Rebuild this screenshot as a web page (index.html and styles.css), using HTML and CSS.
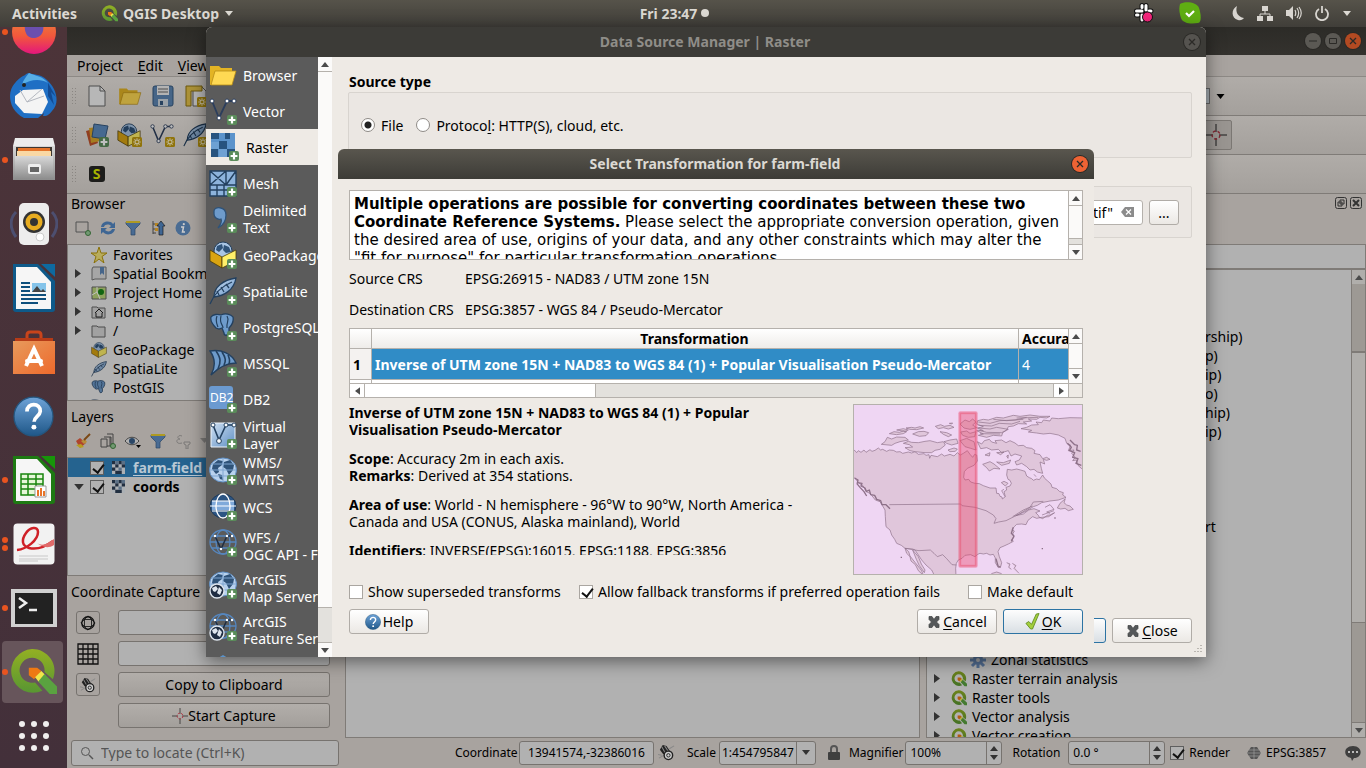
FILE: index.html
```html
<!DOCTYPE html>
<html lang="en">
<head>
<meta charset="utf-8">
<title>QGIS Desktop</title>
<link rel="stylesheet" href="styles.css">
</head>
<body>
<svg class="defs" aria-hidden="true">
  <defs>
    <linearGradient id="g-blue" x1="0" y1="0" x2="1" y2="1"><stop offset="0" stop-color="#cfe0f2"/><stop offset="1" stop-color="#5f8fc4"/></linearGradient>
    <linearGradient id="g-help" x1="0" y1="0" x2="0" y2="1"><stop offset="0" stop-color="#6ea3d8"/><stop offset="1" stop-color="#1f5788"/></linearGradient>
    <linearGradient id="g-fire" x1="0" y1="0" x2="0" y2="1"><stop offset="0" stop-color="#e8923a"/><stop offset=".6" stop-color="#f2573c"/><stop offset="1" stop-color="#e3167d"/></linearGradient>
    <linearGradient id="g-grey" x1="0" y1="0" x2="0" y2="1"><stop offset="0" stop-color="#d8d8d8"/><stop offset="1" stop-color="#8d8d8d"/></linearGradient>
    <linearGradient id="g-q" x1="0" y1="0" x2="0" y2="1"><stop offset="0" stop-color="#93b023"/><stop offset="1" stop-color="#589632"/></linearGradient>
    <linearGradient id="g-shop" x1="0" y1="0" x2="1" y2="1"><stop offset="0" stop-color="#e79a5c"/><stop offset="1" stop-color="#ee6a2c"/></linearGradient>
  </defs>
  <symbol id="plus" viewBox="0 0 10 10"><rect width="10" height="10" rx="2" fill="#5a8c5a"/><path d="M5 1.600v6.800M1.600 5h6.800" stroke="#fff" stroke-width="2.200"/></symbol>
  <symbol id="star8" viewBox="0 0 10 10"><rect width="10" height="10" rx="1.500" fill="#c09a10"/><path d="M5 1.300v7.400M1.300 5h7.400M2.400 2.400l5.200 5.200M7.600 2.400L2.400 7.600" stroke="#fff6c8" stroke-width="1.100"/><circle cx="5" cy="5" r="1.200" fill="#c09a10"/></symbol>
  <symbol id="qlogo" viewBox="0 0 46 46"><path fill-rule="evenodd" d="M22 1a21 21 0 1 0 10 40l-7-8A12 12 0 1 1 34 23l8 7A21 21 0 0 0 22 1z" fill="url(#g-q)"/><path d="M19 19h8l4 3-7 8-5-4z" fill="#ee7913"/><path d="M25 28l6-6 4 4-6 7z" fill="#f0e64a"/><path d="M28 32l6-7 12 12v7h-7z" fill="#5aa240"/></symbol>
  <symbol id="folder" viewBox="0 0 28 24"><path d="M1 3h9l2 2h11v4H7L3 22H1z" fill="#e3b424"/><path d="M6 8h21l-4 14H2z" fill="#ffd953" stroke="#b78d16" stroke-width=".8"/></symbol>
  <symbol id="vector" viewBox="0 0 28 28"><path d="M3 4l7 17 8-17h7" fill="none" stroke="#2c3e5c" stroke-width="1.800"/><g fill="#fff" stroke="#2c3e5c"><circle cx="3" cy="4" r="2"/><circle cx="10" cy="21" r="2"/><circle cx="18" cy="4" r="2"/><circle cx="25" cy="4" r="2"/></g></symbol>
  <symbol id="raster" viewBox="0 0 24 24"><path fill="#5b93cb" d="M0 0h24v24H0z"/><path fill="#27537f" d="M0 0h8v6H0zM14 0h5v6h-5zM8 8h8v8H8zM0 16h7v8H0zM16 16h8v8h-8z"/><path fill="#9cc3e8" d="M0 9h8v7H0zM8 16h8v8H8z" opacity=".3"/></symbol>
  <symbol id="raster-mono" viewBox="0 0 12 12"><path fill="#e4eaf0" d="M0 0h12v12H0z"/><path fill="#2c3e55" d="M0 0h3v3H0zM6 0h3v3H6zM3 3h3v3H3zM9 3h3v3H9zM0 6h3v3H0zM6 9h3v3H6zM3 9h3v3H3z"/><path fill="#7995b3" d="M3 0h3v3H3zM6 6h3v3H6zM9 0h3v3H9z"/></symbol>
  <symbol id="mesh" viewBox="0 0 28 28"><path fill="#8db3dc" d="M1 2h26v25H1z"/><path d="M1 2h26v25H1zM1 16h26M17 2v14M1 2l16 14M17 2L1 16M17 16L27 2M8 16v11M15 16v11M1 21h26" fill="none" stroke="#23405f" stroke-width="1.400"/></symbol>
  <symbol id="comma" viewBox="0 0 28 28"><path d="M5 6c0-5 12-5 12 4 0 7-4 11-8 13 3-4 4-7 3-9-3 1-7-1-7-5z" fill="#6e9bcb" stroke="#2f5379" stroke-width="1.300"/></symbol>
  <symbol id="box" viewBox="0 0 28 28"><circle cx="14" cy="10" r="9" fill="#a9c5e4" stroke="#23405f"/><path d="M8 5l5-2 1 4-4 4-3-2zM15 4l5 2 2 5-5 1-3-3z" fill="#2f5379"/><path d="M1 9l12 7v11L1 20z" fill="#d9a411" stroke="#4a3b08" stroke-width=".8"/><path d="M27 9l-14 7v11l14-7z" fill="#fff06a" stroke="#4a3b08" stroke-width=".8"/></symbol>
  <symbol id="feather" viewBox="0 0 28 28"><path d="M27 1C14 3 5 10 5 20c10-1 20-7 22-19z" fill="url(#g-blue)" stroke="#23405f" stroke-width="1.300"/><path d="M1 27C5 17 13 9 23 5M8 14l2 4M12 10l3 5M17 7l3 4" fill="none" stroke="#23405f" stroke-width="1.300"/></symbol>
  <symbol id="elephant" viewBox="0 0 28 28"><path d="M2 4c2-3 7-3 10-2 4-2 10-1 12 2 1 5-2 9-4 11v5c-1 3-5 3-5 0l-2-5-3 1-3-1C4 12 1 8 2 4z" fill="#6e9bcb" stroke="#23405f" stroke-width="1.300"/><path d="M8 3c-2 5 0 8 1 11M18 3c3 5-1 6 0 12M12 3c-2 8 2 8 2 12" stroke="#23405f" fill="none" stroke-width="1.200"/></symbol>
  <symbol id="mssql" viewBox="0 0 28 28"><path d="M1 2c12-2 22 3 26 12-8 0-17 4-25 12C7 17 6 9 1 2z" fill="#6e9bcb" stroke="#23405f" stroke-width="1.400"/><path d="M7 2c5 7 5 11 2 18M13 3c4 6 4 9 2 13M19 6c2 4 2 6 1 9" fill="none" stroke="#23405f" stroke-width="1.600"/></symbol>
  <symbol id="db2" viewBox="0 0 28 28"><rect x="0" y="1" width="24" height="23" rx="3" fill="#6b9ad0"/><text x="1" y="17" font-size="12" font-family="Noto Sans, sans-serif" fill="#fff">DB2</text></symbol>
  <symbol id="virtual" viewBox="0 0 28 28"><path d="M2 2h24v24H2z" fill="url(#g-blue)" stroke="#eef4fb"/><path d="M4 4l6 15 7-15h8" fill="none" stroke="#23405f" stroke-width="1.600"/><g fill="#fff" stroke="#23405f"><circle cx="4" cy="4" r="2"/><circle cx="10" cy="20" r="2.400"/><circle cx="17" cy="4" r="2"/><circle cx="25" cy="4" r="2"/></g></symbol>
  <symbol id="earth" viewBox="0 0 28 28"><ellipse cx="14" cy="13" rx="13.500" ry="12" fill="#b9d2ee" stroke="#5f8fc4"/><path d="M4 7l5-4 5 1-1 4-4 3 1 4-3 2-4-5zM15 5l6-2 4 5-1 5-4 5-3-6-3-2zM9 17l4 1 1 5-3-1z" fill="#2f5379"/><path d="M1 13h26M14 1v24M3 7h22M3 19h22" stroke="#7fa5d0" fill="none"/></symbol>
  <symbol id="wcs" viewBox="0 0 28 28"><ellipse cx="14" cy="13" rx="13" ry="12" fill="#2c5583" stroke="#203b5a"/><path d="M3 8h22v9H3z" fill="#7fa9da"/><path d="M1 13h26M3 8h22M3 18h22" stroke="#fff" stroke-width="1.200"/><ellipse cx="14" cy="13" rx="7" ry="12" fill="none" stroke="#fff" stroke-width="1.300"/></symbol>
  <symbol id="wfs" viewBox="0 0 28 28"><g fill="none" stroke="#5687bf" stroke-width="1.300"><ellipse cx="14" cy="13" rx="13" ry="12"/><ellipse cx="14" cy="13" rx="7" ry="12"/><path d="M1 13h26M3 7h22M3 19h22"/></g><path d="M6 7l6 13 6-13h5" fill="none" stroke="#1f2d42" stroke-width="1.500"/><g fill="#fff"><circle cx="6" cy="7" r="1.200"/><circle cx="12" cy="20" r="1.200"/><circle cx="18" cy="7" r="1.200"/><circle cx="23" cy="7" r="1.200"/></g></symbol>
  <symbol id="arcball" viewBox="0 0 16 16"><circle cx="8" cy="8" r="7" fill="#1f2d42" stroke="#dfe6ee" stroke-width="1.400"/><path d="M3 5l4-2 2 3-3 3-2-1zM10 4l3 3-2 5-3-2z" fill="#dfe6ee"/></symbol>
  <symbol id="quest" viewBox="0 0 20 20"><circle cx="10" cy="10" r="9.500" fill="url(#g-help)" stroke="#24567f" stroke-width=".6"/><path d="M6.800 7.500c0-4.500 6.800-4.300 6.500 0-.2 2.300-3 2.600-3 5" fill="none" stroke="#fff" stroke-width="1.800"/><circle cx="10.200" cy="15.200" r="1.200" fill="#fff"/></symbol>
  <symbol id="cross" viewBox="0 0 14 14"><path d="M2 1.500h3l2 3 2-3h3v3L9.500 7l2.500 2.500v3H9l-2-3-2 3H2v-3L4.500 7 2 4.500z" fill="#55585a" stroke="#3d3f41" stroke-width=".7"/></symbol>
  <symbol id="tick" viewBox="0 0 16 18"><path d="M1 11l3-2 3 3 5-11 3-.5L8 17H6z" fill="#a4cf3e" stroke="#5d8a1c" stroke-width=".9"/></symbol>
  <symbol id="up" viewBox="0 0 8 5"><path d="M0 5l4-5 4 5z"/></symbol>
  <symbol id="down" viewBox="0 0 8 5"><path d="M0 0h8L4 5z"/></symbol>
  <symbol id="right" viewBox="0 0 6 9"><path d="M0 0l6 4.500L0 9z"/></symbol>
  <symbol id="left" viewBox="0 0 6 9"><path d="M6 0L0 4.500 6 9z"/></symbol>
  <symbol id="x" viewBox="0 0 16 16"><path d="M5 5l6 6M11 5l-6 6" stroke-width="1.300" fill="none"/></symbol>
  <symbol id="funnel" viewBox="0 0 16 16"><path d="M1 2h14v2l-5 5v6H6V9L1 4z" fill="#5b86b8" stroke="#35587f" stroke-width=".7"/><path d="M1 1h14v2H1z" fill="#d9c02c"/></symbol>
  <symbol id="target" viewBox="0 0 22 22"><path d="M11 0v8M11 14v8M0 11h8M14 11h8" stroke="#222" stroke-width="1"/><circle cx="11" cy="11" r="4" fill="none" stroke="#b03040" stroke-width="1.300" stroke-dasharray="3 2"/></symbol>
  <symbol id="mouse" viewBox="0 0 18 18"><path d="M2 6l3-5 4 1 4 6-4 5-4-3z" fill="#222"/><path d="M4 3l4 7M7 2l4 6M1 15l5-3M0 11l4 1M12 5l5-3" stroke="#888" stroke-width="1.100"/><circle cx="11" cy="12" r="4.500" fill="#ccc" stroke="#222" stroke-width="1.500"/><circle cx="11" cy="12" r="1.800" fill="none" stroke="#222"/></symbol>
  <symbol id="fold" viewBox="0 0 16 16"><path d="M1 3h5l1 1h7v10H1z" fill="#d7d7d7" stroke="#666"/></symbol>
</svg>

<header class="topbar">
  <button class="tb-item">Activities</button>
  <button class="tb-item tb-app"><svg width="17" height="17"><use href="#qlogo"/></svg>QGIS Desktop<svg class="caret" width="10" height="5"><use href="#down"/></svg></button>
  <button class="tb-item tb-clock">Fri 23:47 <span class="dot"></span></button>
  <div class="tray">
    <svg class="slack" width="20" height="20" viewBox="0 0 20 20"><g stroke="#111" stroke-width="5" stroke-linecap="round"><path d="M8 2.500v5M2.500 8H8M12 2.500V8M12 8h5M2.500 12H6M8 12v5"/></g><g stroke="#fff" stroke-width="3" stroke-linecap="round"><path d="M8 2.500v2M2.500 8H8M12 2.500V7M15 8h2M2.500 12H4M8 12v5"/></g><circle cx="13.500" cy="14" r="5" fill="#f5257c" stroke="#111"/></svg>
    <svg class="skype" width="22" height="22" viewBox="0 0 22 22"><path d="M1 2C6-1 18 0 20 6s3 14-1 15c-6 1-15 1-17-5S0 6 1 2z" fill="#5fae12"/><path d="M7 11l3 3 5-5" fill="none" stroke="#fff" stroke-width="2.200"/></svg>
    <svg class="moon" width="14" height="16" viewBox="0 0 14 16"><path d="M6 1C0 4 0 13 7 15c3 1 5-1 6-2C7 12 4 7 6 1z" fill="#d8d5d0"/></svg>
    <svg class="net" width="16" height="16" viewBox="0 0 16 16"><path d="M5 1h6v5H5zM0 11h6v5H0zM10 11h6v5h-6z" fill="#d8d5d0"/><path d="M8 6v3M3 11V9h10v2" fill="none" stroke="#d8d5d0"/></svg>
    <svg class="vol" width="16" height="14" viewBox="0 0 16 14"><path d="M0 4h3l4-4v14l-4-4H0z" fill="#d8d5d0"/><path d="M9 4c1 2 1 4 0 6M11 2c2 3 2 7 0 10M13 1c3 4 3 8 0 12" fill="none" stroke="#d8d5d0" stroke-width="1.200"/></svg>
    <svg class="power" width="14" height="15" viewBox="0 0 14 15"><path d="M4 3a6 6 0 1 0 6 0M7 0v7" fill="none" stroke="#d8d5d0" stroke-width="1.800"/></svg>
    <svg class="caret" width="10" height="5"><use href="#down"/></svg>
  </div>
</header>

<main class="desktop">
  <nav class="dock" aria-label="Dock">
    <a href="#" class="run1" aria-label="Firefox"><svg width="46" height="46" viewBox="0 0 46 46"><circle cx="23" cy="23" r="22" fill="url(#g-fire)"/><path d="M14 16c2-6 14-8 18-1 2 10-4 14-10 14s-9-6-8-13z" fill="#6b4fae"/></svg></a>
    <a href="#" aria-label="Thunderbird"><svg width="48" height="48" viewBox="0 0 48 48"><path d="M19 1c3 2 11 0 18 7 10 9 13 23 5 31-4 5-6 5-9 5l1-3-6 5H14C4 41 0 32 0 24 0 14 8 7 13 4c2 0 3-3 6-3z" fill="#1f6fc4"/><path d="M19 1c6 3 14 3 19 10-9-5-18-3-26 2 1-5 4-8 7-12z" fill="#58aee6"/><path d="M38 11l8 14-5-5 3 13-6-9z" fill="#124b94"/><path d="M5 24l8-6 20-1 5 13-6 12-18-1-9-10z" fill="#f4f4f4"/><path d="M10 18l7 12 15-13M17 30l17-6" fill="none" stroke="#b4b8c0"/><circle cx="14" cy="13" r="2" fill="#222"/></svg></a>
    <a href="#" class="run1" aria-label="Files"><svg width="42" height="46" viewBox="0 0 42 46"><path d="M2 1h38l2 8H0z" fill="#ececec"/><path d="M0 9h42v34H0z" fill="url(#g-grey)"/><path d="M3 10h36v11H3z" fill="#3d3630"/><path d="M5 11h32v9H5z" fill="#e5742a"/><path d="M4 14h34v5H4z" fill="#f9d8a4"/><path d="M2 19h38v23H2z" fill="url(#g-grey)"/><rect x="15" y="27" width="13" height="10" rx="2" fill="#eee"/><path d="M17 30h9v5h-9z" fill="#666"/></svg></a>
    <a href="#" aria-label="Rhythmbox"><svg width="48" height="46" viewBox="0 0 48 46"><path d="M6 11C-1 18 0 28 6 36M42 11c7 7 6 17 0 25" fill="none" stroke="#4d4f70" stroke-width="3"/><rect x="9" y="2" width="30" height="42" rx="5" fill="#ededed"/><circle cx="24" cy="21" r="11" fill="#333"/><circle cx="24" cy="21" r="8.500" fill="#e7ac20"/><circle cx="24" cy="21" r="4" fill="#333"/><circle cx="30" cy="36" r="4" fill="#fff" stroke="#ccc"/></svg></a>
    <a href="#" aria-label="Writer"><svg width="42" height="48" viewBox="0 0 42 48"><path d="M0 0h25l17 17v28q0 3-3 3H3q-3 0-3-3z" fill="#0e5a8a"/><path d="M28 0h14v13z" fill="#0e6aa0"/><path d="M3 3h21l14 15v27H3z" fill="#f6f6f6"/><path d="M8 19h9M8 23h9M8 27h9M8 31h25M8 35h25M8 39h17" stroke="#0e4f7c" stroke-width="2"/><path d="M19 19h14v9H19z" fill="#85c4ea"/><path d="M19 28l5-6 4 5 2-2 3 3z" fill="#444"/></svg></a>
    <a href="#" aria-label="Software"><svg width="44" height="44" viewBox="0 0 44 44"><path d="M15 12V5q0-3 3-3h8q3 0 3 3v7" fill="none" stroke="#c9441b" stroke-width="3"/><path d="M3 8h38v6H3z" fill="#b63b17"/><path d="M1 11h42v33H1z" fill="url(#g-shop)"/><path d="M14 36l8-17 8 17" fill="none" stroke="#fff" stroke-width="4"/><rect x="13" y="29" width="18" height="4" rx="2" fill="#fff"/></svg></a>
    <a href="#" aria-label="Help"><svg width="41" height="41"><use href="#quest"/></svg></a>
    <a href="#" class="run1" aria-label="Calc"><svg width="42" height="48" viewBox="0 0 42 48"><path d="M0 0h25l17 17v28q0 3-3 3H3q-3 0-3-3z" fill="#1d7a12"/><path d="M28 0h14v13z" fill="#17960a"/><path d="M3 3h21l14 15v27H3z" fill="#f6f6f6"/><path d="M8 18h22v21H8zM8 23h22M8 28h22M8 33h22M15 18v21M23 18v21" fill="#e6f7d9" stroke="#18850e" stroke-width="1.500"/><path d="M22 30h11v11H22z" fill="#fff" stroke="#999"/><path d="M25 40v-6M28 40v-8M31 40v-5" stroke="#e8742a" stroke-width="2"/></svg></a>
    <a href="#" class="run2" aria-label="Document Viewer"><svg width="42" height="42" viewBox="0 0 42 42"><rect x=".5" y=".5" width="41" height="41" rx="4" fill="#f2f2f2"/><path d="M4 27C14 26 25 17 25 9c0-6-8-5-12 1-5 7-4 13 3 15 8 2 16-1 24-7" fill="none" stroke="#cf2027" stroke-width="2.500"/><path d="M24 20c6 4 11 0 17-4v6c-6 4-12 2-17-2z" fill="#e16a6a"/><path d="M6 33h29M6 36h29M6 38h19" stroke="#c8c8c8"/></svg></a>
    <a href="#" class="run1" aria-label="Terminal"><svg width="46" height="38" viewBox="0 0 46 38"><path d="M0 0h46v38H0z" fill="#d0d0d0"/><path d="M4 4h38v31H4z" fill="#222"/><path d="M8 9l7 5-7 5M18 21h8" fill="none" stroke="#eee" stroke-width="2.500"/></svg></a>
    <a href="#" class="run1 current" aria-label="QGIS"><svg width="48" height="48"><use href="#qlogo"/></svg></a>
    <a href="#" aria-label="Show Applications"><svg width="32" height="32" viewBox="0 0 32 32" fill="#f0eeee"><circle cx="4" cy="4" r="3"/><circle cx="16" cy="4" r="3"/><circle cx="28" cy="4" r="3"/><circle cx="4" cy="16" r="3"/><circle cx="16" cy="16" r="3"/><circle cx="28" cy="16" r="3"/><circle cx="4" cy="28" r="3"/><circle cx="16" cy="28" r="3"/><circle cx="28" cy="28" r="3"/></svg></a>
  </nav>

  <section class="qgis" aria-label="QGIS">
    <div class="q-title">
      <button class="wbtn" aria-label="Minimize"><svg width="16" height="16" viewBox="0 0 16 16"><path d="M4 8h8"/></svg></button>
      <button class="wbtn" aria-label="Maximize"><svg width="16" height="16" viewBox="0 0 16 16"><path d="M4.500 5.500h7v5h-7z"/></svg></button>
      <button class="wbtn wclose" aria-label="Close"><svg width="16" height="16"><use href="#x"/></svg></button>
    </div>
    <div class="menubar"><button>Pro<u>j</u>ect</button><button><u>E</u>dit</button><button><u>V</u>iew</button></div>
    <div class="toolbar">
      <i class="grip"></i>
      <button aria-label="New"><svg width="18" height="22" viewBox="0 0 18 22"><path d="M1 1h11l5 5v15H1z" fill="#f4f4f4" stroke="#666"/><path d="M12 1v5h5" fill="none" stroke="#666"/></svg></button>
      <button aria-label="Open"><svg width="24" height="20"><use href="#folder"/></svg></button>
      <button aria-label="Save"><svg width="22" height="22" viewBox="0 0 22 22"><rect x="1" y="1" width="20" height="20" rx="2" fill="#5d87b4" stroke="#35587f"/><path d="M5 1h12v9H5z" fill="#eee"/><path d="M6 4h10M6 7h10" stroke="#666"/><path d="M6 14h10v7H6z" fill="#cfd8e0"/><path d="M8 16h3v4H8z" fill="#35587f"/></svg></button>
      <button aria-label="New layout"><svg width="22" height="22" viewBox="0 0 22 22"><path d="M8 2h9l4 4v15H8z" fill="#f4f4f4" stroke="#666"/><path d="M1 1h16v5H6v15H1z" fill="#e6c44a" stroke="#8f7512"/><use href="#star8" x="12" y="12" width="10" height="10"/></svg></button>
      <span class="spacer"></span>
      <button class="combo-edge" aria-label="Colour"></button><button aria-label="More"><svg width="9" height="5"><use href="#down"/></svg></button>
    </div>
    <div class="toolbar">
      <i class="grip"></i>
      <button aria-label="Data source manager"><svg width="24" height="24" viewBox="0 0 24 24"><path d="M1 8l7-2 5 14-8 3z" fill="#c0532a"/><path d="M4 5l8-1 3 14-9 2z" fill="#dba72a"/><path d="M9 1l14 2-3 13-13-2z" fill="#5d8cc0" stroke="#35587f"/><use href="#plus" x="14" y="14" width="10" height="10"/></svg></button>
      <button aria-label="New GeoPackage"><svg width="25" height="24" viewBox="0 0 25 24"><use href="#box" width="24" height="24"/><use href="#star8" x="15" y="14" width="10" height="10"/></svg></button>
      <button aria-label="New shapefile"><svg width="25" height="24" viewBox="0 0 25 24"><use href="#vector" width="24" height="24"/><use href="#star8" x="15" y="14" width="10" height="10"/></svg></button>
      <button aria-label="New SpatiaLite"><svg width="25" height="24" viewBox="0 0 25 24"><use href="#feather" width="24" height="24"/><use href="#star8" x="15" y="14" width="10" height="10"/></svg></button>
      <span class="spacer"></span>
      <button class="pressed" aria-label="Capture"><svg width="22" height="22"><use href="#target"/></svg></button>
    </div>
    <div class="toolbar"><i class="grip"></i><button aria-label="Plugin"><span class="splug">S</span></button></div>

    <div class="workarea">
      <aside class="left">
        <div class="browser-panel">
          <h2>Browser</h2>
          <div class="mini">
            <svg viewBox="0 0 16 16"><path d="M1 2h12v10H1z" fill="none" stroke="#666"/><circle cx="13" cy="13" r="2.500" fill="#8fbf8f" stroke="#3f7d3f"/></svg>
            <svg viewBox="0 0 16 16"><path d="M1 7c1-6 9-7 12-3l2-2v6H9l2-2c-2-2-6-2-7 1zM15 9c-1 6-9 7-12 3l-2 2V8h6l-2 2c2 2 6 2 7-1z" fill="#4f7fb8"/></svg>
            <svg><use href="#funnel"/></svg>
            <svg viewBox="0 0 16 16"><path d="M3 1v13M3 4h3M3 9h3M3 13h3" stroke="#555"/><path d="M5 3h3v3H5zM5 8h3v3H5z" fill="#e2a52a"/><path d="M11 1l4 5h-2v9H9V6H7z" fill="#4f7fb8" stroke="#222" stroke-width=".7"/></svg>
            <svg viewBox="0 0 16 16"><circle cx="8" cy="8" r="7.500" fill="#5d87b8"/><path d="M6 7h2.500L7.500 12H10" stroke="#fff" fill="none" stroke-width="1.500"/><circle cx="8.800" cy="4.200" r="1.100" fill="#fff"/></svg>
          </div>
          <ul class="tree">
            <li><i></i><svg class="ic" viewBox="0 0 16 16"><path d="M8 0l2 6h6l-5 3.500L13 16l-5-4-5 4 2-6.500L0 6h6z" fill="#f5e57a" stroke="#b8960c"/></svg>Favorites</li>
            <li><i><svg><use href="#right"/></svg></i><svg class="ic" viewBox="0 0 16 16"><path d="M2 1h13v12H4l-3 1V3z" fill="#ddd" stroke="#777"/><path d="M9 1h4v8l-2-2-2 2z" fill="#5d87b8"/></svg>Spatial Bookmarks</li>
            <li><i><svg><use href="#right"/></svg></i><svg class="ic" viewBox="0 0 16 16"><path d="M1 2h14v12H1z" fill="#bcd77c" stroke="#666"/><path d="M1 10l5-3 3 7M6 2v5" stroke="#fff" fill="none"/><circle cx="10" cy="7" r="3" fill="#178717"/></svg>Project Home</li>
            <li><i><svg><use href="#right"/></svg></i><svg class="ic" viewBox="0 0 16 16"><use href="#fold"/><path d="M4 9l4-4 4 4M5 9v4h6V9" fill="none" stroke="#222"/></svg>Home</li>
            <li><i><svg><use href="#right"/></svg></i><svg class="ic"><use href="#fold"/></svg>/</li>
            <li><i></i><svg class="ic"><use href="#box"/></svg>GeoPackage</li>
            <li><i></i><svg class="ic"><use href="#feather"/></svg>SpatiaLite</li>
            <li><i></i><svg class="ic"><use href="#elephant"/></svg>PostGIS</li>
            <li><i></i><svg class="ic"><use href="#mssql"/></svg></li>
          </ul>
        </div>
        <div class="layers-panel">
          <h2>Layers</h2>
          <div class="mini">
            <svg viewBox="0 0 16 16"><path d="M1 8l4-3 6 5-6 5z" fill="#d9563a"/><path d="M1 12l5-1 3 3-4 1z" fill="#e6c42a"/><path d="M6 8l4-2 2 3-3 2z" fill="#e6b04a"/><path d="M9 7l6-6" stroke="#9a5a1a" stroke-width="2"/></svg>
            <svg viewBox="0 0 16 16"><path d="M1 6h6v8H1zM4 4h7v9H7M7 1h6v10h-2M10 4v9" fill="none" stroke="#555"/><circle cx="13" cy="13" r="2.500" fill="#8fbf8f" stroke="#3f7d3f"/></svg>
            <svg viewBox="0 0 16 16"><path d="M0 8c4-5 10-5 14 0-4 5-10 5-14 0z" fill="#ddd" stroke="#555"/><circle cx="7" cy="8" r="3" fill="#35587f"/><path d="M11 12h5l-2.500 3z"/></svg>
            <svg><use href="#funnel"/></svg>
            <svg class="faded" viewBox="0 0 16 16"><path d="M7 3C3 1 1 6 5 6 0 6 1 12 7 10M9 9h6v2l-2 1v4h-2v-4l-2-1z" fill="none" stroke="#777"/></svg>
            <svg class="faded" viewBox="0 0 16 16"><path d="M0 5h9L4.500 10z" fill="#777"/></svg>
          </div>
          <ul class="tree layers">
            <li class="sel"><i></i><input type="checkbox" checked aria-label="farm-field"><svg class="ic"><use href="#raster-mono"/></svg><b><u>farm-field</u></b></li>
            <li><i><svg class="dn"><use href="#down"/></svg></i><input type="checkbox" checked aria-label="coords"><svg class="ic"><use href="#raster-mono"/></svg><b>coords</b></li>
          </ul>
        </div>
        <div class="capture">
          <h2>Coordinate Capture</h2>
          <div class="cap-row"><button class="sq" aria-label="CRS"><svg viewBox="0 0 18 18"><circle cx="9" cy="9" r="7" fill="none" stroke="#111" stroke-width="1.500"/><path d="M9 1l8 8-8 8-8-8zM5 5h8v8H5z" fill="none" stroke="#111"/></svg></button><input type="text" aria-label="Coordinate in CRS"></div>
          <div class="cap-row"><span class="sq bare"><svg viewBox="0 0 22 22"><path d="M1 1h20v20H1zM6 1v20M11 1v20M16 1v20M1 6h20M1 11h20M1 16h20" fill="none" stroke="#111" stroke-width="1.300"/></svg></span><input type="text" aria-label="Coordinate in canvas"></div>
          <div class="cap-row"><button class="sq" aria-label="Track"><svg><use href="#mouse"/></svg></button><button class="wide">Copy to Clipboard</button></div>
          <div class="cap-row"><span class="sq bare"></span><button class="wide"><svg width="16" height="16"><use href="#target"/></svg>Start Capture</button></div>
        </div>
      </aside>
      <div class="canvas"></div>
      <aside class="rightpane">
        <div class="rp-head"><button aria-label="Float"><svg viewBox="0 0 12 12"><rect x=".5" y=".5" width="11" height="11" rx="2"/><path d="M5 3h4v4H5zM3 5h4v4H3z"/></svg></button><button aria-label="Close panel"><svg viewBox="0 0 12 12"><rect x=".5" y=".5" width="11" height="11" rx="2"/><path d="M3 3l6 6M9 3L3 9" stroke-width="2"/></svg></button></div>
        <input class="rp-search" type="text" aria-label="Search">
        <div class="rp-body">
          <div class="rp-list">
            <ul class="tails"><li>rship)</li><li>p)</li><li>ip)</li><li>o)</li><li>hip)</li><li>ip)</li></ul>
            <ul class="tails tail2"><li>rt</li></ul>
            <ul class="tools">
              <li class="sub"><svg class="ic" viewBox="0 0 16 16"><path d="M8 0v16M0 8h16M2 2l12 12M14 2L2 14" stroke="#6f93c4" stroke-width="3"/><circle cx="8" cy="8" r="5" fill="#6f93c4"/><circle cx="8" cy="8" r="2" fill="#ddd"/></svg>Zonal statistics</li>
              <li><i><svg><use href="#right"/></svg></i><svg class="ic"><use href="#qlogo"/></svg>Raster terrain analysis</li>
              <li><i><svg><use href="#right"/></svg></i><svg class="ic"><use href="#qlogo"/></svg>Raster tools</li>
              <li><i><svg><use href="#right"/></svg></i><svg class="ic"><use href="#qlogo"/></svg>Vector analysis</li>
              <li><i><svg><use href="#right"/></svg></i><svg class="ic"><use href="#qlogo"/></svg>Vector creation</li>
            </ul>
          </div>
          <div class="vbar dim"><span class="sb"><svg><use href="#up"/></svg></span><span class="trough t1"></span><span class="thumb"></span><span class="trough t2"></span><span class="sb"><svg><use href="#down"/></svg></span></div>
        </div>
      </aside>
    </div>

    <footer class="status">
      <label class="locate"><svg width="14" height="14" viewBox="0 0 14 14"><circle cx="5.500" cy="5.500" r="4" fill="none" stroke="#555"/><path d="M9 9l4 4" stroke="#555" stroke-width="1.500"/></svg><input type="text" placeholder="Type to locate (Ctrl+K)"></label>
      <label for="coord">Coordinate</label><input id="coord" class="f coord" value="13941574,-32386016"><svg class="smouse" width="17" height="17"><use href="#mouse"/></svg>
      <label for="scale">Scale</label><span class="selwrap"><select id="scale" class="f"><option>1:454795847</option></select><svg width="8" height="5"><use href="#down"/></svg></span>
      <svg class="lock" width="12" height="16" viewBox="0 0 12 16"><path d="M3 8V4q0-3 3-3t3 3v4" fill="none" stroke="#555" stroke-width="2"/><rect y="7" width="12" height="8" rx="1" fill="#3f3f3f"/></svg>
      <label for="mag">Magnifier</label><span class="spin"><input id="mag" value="100%"><span><svg><use href="#up"/></svg><svg><use href="#down"/></svg></span></span>
      <label for="rot" class="rotl">Rotation</label><span class="spin"><input id="rot" value="0.0 °"><span><svg><use href="#up"/></svg><svg><use href="#down"/></svg></span></span>
      <label class="render"><input type="checkbox" checked>Render</label>
      <button class="crs"><svg width="14" height="14" viewBox="0 0 14 14"><path d="M4 1h6l4 6-4 6H4L0 7z" fill="#555"/><path d="M0 7h14M7 0v14M2 4h10M2 10h10" stroke="#aaa" stroke-width=".6"/></svg>EPSG:3857</button>
      <button class="msg" aria-label="Messages"><svg width="16" height="16" viewBox="0 0 16 16"><path d="M8 1c10 0 10 12 1 12l-2 3-1-3C-2 12-2 1 8 1z" fill="#3f3f3f"/><path d="M3 7h2M7 7h2M11 7h2" stroke="#bbb" stroke-width="2"/></svg></button>
    </footer>
  </section>
</main>

<section class="win dsm" role="dialog" aria-label="Data Source Manager">
  <div class="wtitle inactive"><h1>Data Source Manager | Raster</h1><button class="wbtn" aria-label="Close"><svg width="16" height="16"><use href="#x"/></svg></button></div>
  <div class="dsm-body">
    <nav class="sources">
      <a href="#"><svg class="si"><use href="#folder"/></svg>Browser</a>
      <a href="#"><span class="si"><svg><use href="#vector"/></svg><svg class="pl"><use href="#plus"/></svg></span>Vector</a>
      <a href="#" class="on"><span class="si"><svg class="ras"><use href="#raster"/></svg><svg class="pl"><use href="#plus"/></svg></span>Raster</a>
      <a href="#"><span class="si"><svg><use href="#mesh"/></svg><svg class="pl"><use href="#plus"/></svg></span>Mesh</a>
      <a href="#" class="two"><span class="si"><svg><use href="#comma"/></svg><svg class="pl"><use href="#plus"/></svg></span>Delimited<br>Text</a>
      <a href="#"><span class="si"><svg><use href="#box"/></svg><svg class="pl"><use href="#plus"/></svg></span>GeoPackage</a>
      <a href="#"><span class="si"><svg><use href="#feather"/></svg><svg class="pl"><use href="#plus"/></svg></span>SpatiaLite</a>
      <a href="#"><span class="si"><svg><use href="#elephant"/></svg><svg class="pl"><use href="#plus"/></svg></span>PostgreSQL</a>
      <a href="#"><span class="si"><svg><use href="#mssql"/></svg><svg class="pl"><use href="#plus"/></svg></span>MSSQL</a>
      <a href="#"><span class="si"><svg><use href="#db2"/></svg><svg class="pl"><use href="#plus"/></svg></span>DB2</a>
      <a href="#" class="two"><span class="si"><svg><use href="#virtual"/></svg><svg class="pl"><use href="#plus"/></svg></span>Virtual<br>Layer</a>
      <a href="#" class="two"><span class="si"><svg><use href="#earth"/></svg><svg class="pl"><use href="#plus"/></svg></span>WMS/<br>WMTS</a>
      <a href="#"><span class="si"><svg><use href="#wcs"/></svg><svg class="pl"><use href="#plus"/></svg></span>WCS</a>
      <a href="#" class="two tall"><span class="si"><svg><use href="#wfs"/></svg><svg class="pl"><use href="#plus"/></svg></span>WFS /<br>OGC API - Features</a>
      <a href="#" class="two tall"><span class="si"><svg><use href="#earth"/></svg><svg class="arc"><use href="#arcball"/></svg><svg class="pl"><use href="#plus"/></svg></span>ArcGIS<br>Map Server</a>
      <a href="#" class="two tall"><span class="si"><svg><use href="#wfs"/></svg><svg class="arc"><use href="#arcball"/></svg><svg class="pl"><use href="#plus"/></svg></span>ArcGIS<br>Feature Server</a>
      <a href="#" aria-label="GeoNode"><span class="si"><svg viewBox="0 0 28 28"><path d="M14 0l13 8v12l-13 8-13-8V8z" fill="#5b93cb"/></svg></span></a>
    </nav>
    <div class="vbar src"><span class="sb"><svg><use href="#up"/></svg></span><span class="thumb"></span><span class="trough"></span><span class="sb"><svg><use href="#down"/></svg></span></div>
    <div class="dsm-main">
      <h3>Source type</h3>
      <div class="group g1" role="radiogroup" aria-label="Source type">
        <label><input type="radio" name="st" checked>File</label><label><input type="radio" name="st"><span>Protoco<u>l</u>: HTTP(S), cloud, etc.</span></label>
      </div>
      <div class="group g2">
        <span class="path"><input type="text" aria-label="Raster dataset" value="farm-field.tif&quot;"><svg width="13" height="10" viewBox="0 0 13 10"><path d="M4 0h9v10H4L0 5z" fill="#8b8b8b"/><path d="M5 2.500l5 5M10 2.500l-5 5" stroke="#fff" stroke-width="1.200"/></svg></span><button class="btn dots">...</button>
      </div>
      <div class="dsm-foot"><button class="btn primary" aria-label="Add"></button><button class="btn"><svg width="14" height="14"><use href="#cross"/></svg><span><u>C</u>lose</span></button></div>
      <svg class="resize" width="9" height="9" viewBox="0 0 9 9"><path d="M8 1v1M5 4v1M8 4v1M2 7v1M5 7v1M8 7v1" stroke="#aaa6a0" stroke-width="1.500"/></svg>
    </div>
  </div>
</section>

<section class="win tr" role="dialog" aria-label="Select Transformation for farm-field">
  <div class="wtitle"><h1>Select Transformation for farm-field</h1><button class="wbtn wclose" aria-label="Close"><svg width="16" height="16"><use href="#x"/></svg></button></div>
  <div class="tr-body">
    <div class="note">
      <p><b>Multiple operations are possible for converting coordinates between these two Coordinate Reference Systems.</b> Please select the appropriate conversion operation, given the desired area of use, origins of your data, and any other constraints which may alter the "fit for purpose" for particular transformation operations.</p>
      <div class="vbar"><span class="sb"><svg><use href="#up"/></svg></span><span class="thumb"></span><span class="trough"></span><span class="sb"><svg><use href="#down"/></svg></span></div>
    </div>
    <dl class="crs-pair"><dt>Source CRS</dt><dd>EPSG:26915 - NAD83 / UTM zone 15N</dd><dt>Destination CRS</dt><dd>EPSG:3857 - WGS 84 / Pseudo-Mercator</dd></dl>
    <div class="grid">
      <div class="grid-view"><table><thead><tr><th></th><th class="name">Transformation</th><th>Accuracy (meters)</th></tr></thead><tbody><tr><th>1</th><td><b>Inverse of UTM zone 15N + NAD83 to WGS 84 (1) + Popular Visualisation Pseudo-Mercator</b></td><td>4</td></tr><tr class="next"><th></th><td></td><td></td></tr></tbody></table></div>
      <div class="vbar"><span class="sb"><svg><use href="#up"/></svg></span><span class="thumb"></span><span class="sb"><svg><use href="#down"/></svg></span></div>
      <div class="hbar"><span class="sb"><svg><use href="#left"/></svg></span><span class="thumb"></span><span class="trough"></span><span class="sb"><svg><use href="#right"/></svg></span></div>
      <div class="corner"></div>
    </div>
    <div class="info">
      <div class="desc">
        <p><b>Inverse of UTM zone 15N + NAD83 to WGS 84 (1) + Popular<br>Visualisation Pseudo-Mercator</b></p>
        <p><b>Scope</b>: Accuracy 2m in each axis.<br><b>Remarks</b>: Derived at 354 stations.</p>
        <p><b>Area of use</b>: World - N hemisphere - 96°W to 90°W, North America -<br>Canada and USA (CONUS, Alaska mainland), World</p>
        <p><b>Identifiers</b>: INVERSE(EPSG):16015, EPSG:1188, EPSG:3856</p>
      </div>
      <svg class="map" viewBox="12 15 684 507" preserveAspectRatio="none" role="img" aria-label="Area of use">
        <path fill="#efd6f3" d="M0 0h720v540H0z"/>
        <g fill="#e0c6db" stroke="#8d7088" stroke-width="2" stroke-linejoin="round">
          <path d="M5 157L14 151 20 158 25 152 33 157 42 150 48 157 60 149 66 154 75 151 85 144 92 150 98 148 110 154 118 150 130 151 140 156 150 155 158 160 175 156 185 159 195 155 205 163 222 161 228 166 237 164 239 175 243 166 262 170 275 162 283 168 300 163 312 168 322 158 331 165 340 160 352 152 360 163 368 172 374 163 380 165 382 183 372 196 352 205 343 215 341 232 345 240 356 238 362 246 375 250 388 251 400 257 420 264 438 264 440 280 447 281 450 289 456 291 457 297 466 290 462 275 470 270 468 262 480 258 484 250 480 241 474 238 470 225 472 208 485 210 500 207 512 210 525 214 530 228 538 233 545 236 550 241 560 237 568 239 578 225 584 235 592 242 603 252 606 262 620 266 628 274 640 278 638 285 648 292 625 300 600 303 575 308 562 316 550 320 525 335 497 347 520 342 536 330 552 326 570 333 557 338 565 346 568 352 578 356 592 346 600 345 614 338 596 350 575 352 560 355 548 350 534 361 528 374 515 372 500 373 494 379 486 388 493 393 488 402 492 412 485 418 490 424 475 432 462 438 450 443 444 455 448 470 455 488 452 500 445 503 436 488 436 474 430 463 420 465 410 460 400 462 390 460 383 463 375 470 362 464 345 466 336 475 325 480 319 490 317 505 318 530 255 530 245 510 228 495 215 480 203 462 195 450 188 447 165 445 154 436 140 430 134 418 125 405 120 390 108 380 106 350 105 330 98 318 90 305 76 300 60 280 48 275 40 258 28 250 12 232 5 230z"/>
          <path d="M165 445L176 455 180 468 195 487 215 512 220 526 205 512 196 494 183 483 180 470 170 460zM188 450L205 470 214 492 225 510 223 518 208 497 199 478z"/>
          <path d="M94 133L105 125 112 112 125 117 140 111 165 112 175 120 150 125 135 130 125 136zM118 101L132 95 148 97 160 93 170 95 160 101 140 104zM140 90L160 86 175 90 165 94zM168 84L185 82 195 84 210 80 221 84 200 89 180 88zM188 102L205 95 222 94 236 98 228 107 208 109zM160 130L175 124 185 127 205 128 225 124 240 122 262 128 280 125 286 135 270 148 255 151 245 158 225 158 195 155 180 152 165 143 188 141 178 134zM256 79L272 74 283 79 300 76 312 82 295 87 280 83 265 86zM270 95L290 98 305 105 295 110 280 103zM282 125L300 120 320 117 324 130 305 135 290 130zM294 150L312 144 322 147 316 154 300 155zM298 70L308 69 305 72z"/>
          <path d="M330 72L345 60 358 65 368 57 378 66 368 75 380 83 360 88 342 84zM332 96L350 93 360 100 378 95 374 110 355 112 338 106zM330 122L350 115 360 120 372 125 378 150 362 145 345 140z"/>
          <path d="M383 62L400 58 415 60 440 52 460 54 490 46 510 49 540 45 570 49 600 49 590 54 570 52 560 58 535 57 545 63 520 66 530 72 505 71 490 78 475 80 470 90 458 98 455 108 430 106 410 112 385 106 400 102 380 92 400 92 382 84 400 80 380 72z"/>
          <path fill="none" d="M385 66L420 70 450 62 495 60 530 52M385 76L425 78 448 70 485 72 510 64M385 84L420 87 440 82 475 88 455 98 410 97 385 90M390 101L450 102M500 54L565 52M430 58L470 62 520 58"/>
          <path d="M382 125L395 132 403 122 418 118 425 126 440 130 435 122 455 120 468 128 480 122 495 129 505 137 520 136 530 143 545 145 555 152 552 160 570 164 578 176 590 172 600 178 590 181 580 178 584 192 570 186 574 205 578 220 562 216 552 208 540 210 530 200 515 190 500 195 495 185 508 180 515 168 495 162 483 168 475 152 455 158 445 148 425 150 410 143 392 146zM398 193L420 185 432 192 450 207 432 205 418 213 410 203zM405 165L420 158 418 168zM440 158L462 156 452 164zM440 186L460 188 482 180 478 190 455 196zM454 248L462 244 474 250 466 258zM470 168L475 165 474 175z"/>
          <path d="M513 86L530 82 545 75 565 74 558 66 575 68 580 60 600 63 605 54 625 56 660 53 710 54V214L695 206 684 196 680 180 668 182 676 172 665 160 672 150 655 152 662 135 650 130 645 115 625 105 600 100 580 102 560 99 535 96 545 91z"/>
          <path d="M622 324L630 310 646 296 642 308 650 315 660 318 670 328 655 332 645 325 632 327zM470 488L480 492 476 502 484 508M487 490L498 497 492 505 507 520M424 521L440 516 455 521"/>
          <path fill="none" d="M118 314L332 312 336 317 375 322 408 332 430 345 438 356 432 370 446 366 468 362 480 356 508 342 540 322 550 306 580 304M165 445L207 452 241 450 252 460 262 470 278 464 290 476 306 494 319 495M488 350L520 330 548 318M585 322L600 314 612 328 590 336 600 340M576 345L612 332M465 290L455 272 462 268M552 223L558 230"/>
          <path fill="none" stroke-width="4" d="M14 234L24 240 22 248 36 250 33 258 45 264 49 274 58 270 62 284 74 286 80 298 92 302 96 314 108 314 120 326M20 250L30 262 42 275 50 288M652 130L664 142 658 152 674 158 668 172 684 176 678 190 694 196M660 120L674 134 682 136 680 150 692 154M490 382L484 400 492 408 484 424M438 476L444 498 452 502"/>
        </g>
        <path fill="#8d7088" d="M575 444h4v4h-4zM152 470h4v4h-4zM613 352h4v4h-4z"/>
        <rect x="325" y="34" width="58" height="469" rx="6" fill="#ee4468" fill-opacity=".4"/><rect x="331" y="40" width="46" height="457" fill="none" stroke="#e7526f" stroke-opacity=".5" stroke-width="5"/>
      </svg>
    </div>
    <div class="checks"><label><input type="checkbox">Show superseded transforms</label><label><input type="checkbox" checked>Allow fallback transforms if preferred operation fails</label><label><input type="checkbox">Make default</label></div>
    <div class="actions"><button class="btn"><svg width="16" height="16"><use href="#quest"/></svg>Help</button><span class="spacer"></span><button class="btn"><svg width="14" height="14"><use href="#cross"/></svg><span><u>C</u>ancel</span></button><button class="btn primary"><svg width="15" height="17"><use href="#tick"/></svg><span><u>O</u>K</span></button></div>
  </div>
</section>
</body>
</html>
```
FILE: styles.css
```css
* { box-sizing: border-box; }
body, h1, h2, h3, ul, p, dl, dd { margin: 0; padding: 0; }
body { height: 100vh; display: flex; flex-direction: column; overflow: hidden; position: relative; font: 14px/17px "Noto Sans", "Open Sans", sans-serif; color: #000; background: #4c3439; }
button, input, select { font: inherit; color: inherit; margin: 0; padding: 0; border: 0; background: none; }
ul { list-style: none; }
a { color: inherit; text-decoration: none; }
svg { flex: none; display: block; }
h1, h2, h3 { font-size: 14px; line-height: 17px; }
b { font-weight: 700; }
u { text-underline-offset: 2px; }
.defs { position: absolute; width: 0; height: 0; }
.spacer { flex: 1; }

/* Top bar */
.topbar { flex: none; height: 27px; display: grid; grid-template-columns: auto 1fr auto 1fr; align-items: center; background: linear-gradient(#56534a, #403e39); color: #dcd9d3; padding: 0 12px 1px; }
.tb-app { display: flex; align-items: center; gap: 5px; margin-left: 24px; justify-self: start; }
.tb-item { font-weight: 700; white-space: nowrap; }
.tb-clock { display: flex; align-items: center; gap: 4px; margin-right: 82px; }
.dot { width: 8px; height: 8px; border-radius: 50%; background: #dcd9d3; }
.caret { fill: #dcd9d3; }
.tray { display: flex; align-items: center; justify-content: flex-end; padding-right: 2px; }
.skype { margin: 0 30px 0 25px; }
.moon { margin-right: 12px; }
.net, .vol, .power { margin-right: 13px; }

.desktop { flex: 1; min-height: 0; display: flex; }
.dock { flex: none; width: 67px; display: flex; flex-direction: column; justify-content: flex-end; overflow: hidden; background: linear-gradient(#4c3439, #43303a); }
.dock a { flex: none; height: 64px; display: flex; align-items: center; justify-content: center; position: relative; }
.run1::before, .run2::before { content: ""; position: absolute; left: 2px; width: 6px; height: 6px; border-radius: 50%; background: #e95420; }
.run2::before { box-shadow: 0 8px #e95420; margin-top: -8px; }
.dock .current { height: 62px; margin: 1px 4px 1px 2px; border-radius: 4px; background: #67555b; }
.dock .current::before { left: 0; }

/* Main window */
.qgis { flex: 1; min-width: 0; display: flex; flex-direction: column; background: #a8a39f; }
.q-title { flex: none; height: 28px; display: flex; gap: 4px; align-items: center; justify-content: flex-end; padding-right: 5px; background: linear-gradient(#2c2b27, #34322e); }
.wbtn { width: 16px; height: 16px; border-radius: 50%; background: #5b5954; box-shadow: 0 0 0 1px #2a2926; }
.wbtn svg { stroke: #2b2a27; fill: none; }
.wclose { background: #ee6334; }
.q-title .wclose { background: #b34a22; }
.menubar { flex: none; height: 22px; padding-left: 10px; display: flex; gap: 15px; border-bottom: 1px solid #8d8985; }
.toolbar { flex: none; height: 39px; display: flex; align-items: center; border-bottom: 1px solid #7f7b77; background: linear-gradient(#b0aca8, #a4a09c); padding-left: 4px; }
.toolbar button { min-width: 33px; display: flex; justify-content: center; }
.toolbar button svg { filter: brightness(.75); }
.toolbar .combo-edge { min-width: 5px; height: 16px; border: 1px solid #666; background: #a6adb2; }
.toolbar .combo-edge + button { min-width: 20px; margin-right: 136px; }
.toolbar .pressed { border: 1px solid #7b7773; border-radius: 2px; background: #999591; padding: 3px; margin-right: 134px; }
.grip { flex: none; width: 6px; height: 18px; margin-right: 3px; background: radial-gradient(circle, #8a8682 1px, transparent 1px) 0 0 / 3px 3px; }
.splug { width: 16px; height: 16px; border-radius: 3px; background: #1d1d1b; color: #a8b400; font-weight: 700; line-height: 16px; text-align: center; }
.workarea { flex: 1; min-height: 0; display: flex; }
.left { flex: none; width: 273px; display: flex; flex-direction: column; }
.left h2 { font-weight: 400; padding-left: 4px; }
.browser-panel { flex: none; height: 207px; display: flex; flex-direction: column; padding-top: 1px; }
.mini { flex: none; display: flex; gap: 9px; padding: 8px 0 8px 8px; }
.mini svg { width: 16px; height: 16px; filter: brightness(.8); }
.mini .faded { opacity: .6; }
.tree { border: 1px solid #7f7b77; background: #b1b1b1; overflow: hidden; flex: 1; }
.tree li, .tools li { height: 19px; display: flex; align-items: center; white-space: nowrap; }
.tree i, .tools i { width: 7px; margin: 0 9px 0 7px; }
.tree i svg, .tools i svg { width: 6px; height: 9px; fill: #333; }
.tree i .dn { width: 10px; height: 6px; }
.ic { width: 16px; height: 16px; margin-right: 6px; filter: brightness(.75); }
.layers-panel { flex: none; height: 175px; display: flex; flex-direction: column; padding-top: 7px; }
.layers input { margin-right: 8px; }
.tree.layers i { margin-left: 6px; }
.layers .ic { width: 13px; height: 13px; margin-right: 8px; }
.layers .sel { background: #25638f; color: #b8c8d4; }
.layers .sel u { text-decoration-thickness: 1px; }
input[type=checkbox] { flex: none; appearance: none; width: 14px; height: 14px; border: 1px solid #aaa6a1; background: #fff; position: relative; }
input[type=checkbox]:checked::after { content: ""; position: absolute; left: 4px; top: 0; width: 5px; height: 9px; border: solid #111; border-width: 0 2px 2px 0; transform: rotate(38deg); }
.qgis input[type=checkbox] { background: #b1b1b1; border-color: #5f5f5f; }
.capture { padding-top: 7px; display: flex; flex-direction: column; gap: 6px; }
.capture h2 { margin-bottom: 4px; }
.cap-row { display: flex; height: 25px; padding: 0 10px 0 9px; align-items: center; }
.sq { width: 24px; height: 23px; border: 1px solid #77736f; border-radius: 3px; display: flex; align-items: center; justify-content: center; margin-right: 18px; flex: none; }
.sq svg { width: 16px; height: 16px; }
.sq.bare { border-color: transparent; }
.sq.bare svg { width: 22px; height: 22px; }
.cap-row input, .wide { flex: 1; height: 25px; border: 1px solid #77736f; border-radius: 3px; background: #b1b1b1; }
.wide { display: flex; align-items: center; justify-content: center; background: linear-gradient(#b2aeaa, #a39f9b); }
.canvas { flex: 1; margin-left: 5px; background: #b1b1b1; border: 1px solid #7f7b77; }
.rightpane { flex: none; width: 440px; margin-left: 6px; display: flex; flex-direction: column; }
.rp-head { height: 50px; display: flex; justify-content: flex-end; gap: 3px; padding: 3px 4px 0; }
.rp-head button { width: 12px; height: 12px; }
.rp-head svg { width: 12px; height: 12px; fill: none; stroke: #333; }
.rp-search { height: 25px; border: 1px solid #7f7b77; background: #b1b1b1; }
.rp-body { flex: 1; min-height: 0; display: flex; border: 1px solid #7f7b77; background: #b1b1b1; }
.rp-list { flex: 1; overflow: hidden; }
.tails { padding: 57px 0 0 278px; }
.tails li { height: 19px; line-height: 19px; }
.tail2 { padding-top: 76px; margin-bottom: 114px; }
.tools i { margin-right: 10px; }
.tools .sub { padding-left: 43px; }
.tools .ic { margin-right: 5px; }

/* Scroll bars */
.vbar { flex: none; width: 14px; display: flex; flex-direction: column; border-left: 1px solid #b5b1ac; background: #fbfaf9; }
.sb { flex: none; height: 14px; display: flex; align-items: center; justify-content: center; }
.sb svg { width: 8px; height: 5px; fill: #4b4b4b; }
.thumb { flex: 1; border: solid #b5b1ac; border-width: 1px 0; }
.trough { flex: none; height: 6px; background: #e3e1dd; border-bottom: 1px solid #b5b1ac; }
.dim { background: #b0aeab; border-color: #7f7b77; }
.dim .thumb, .dim .trough { border-color: #7f7b77; }
.dim .trough { background: #9d9994; }
.dim .t1 { height: 68px; }
.dim .t2 { height: 100px; }
.src { border: 0; }
.src .trough { height: 35px; }

/* Status bar */
.status { flex: none; height: 30px; display: flex; align-items: center; font-size: 12px; padding: 0 5px 1px 4px; white-space: nowrap; }
.locate { width: 268px; height: 26px; border: 1px solid #77736f; border-radius: 3px; background: #b1b1b1; display: flex; align-items: center; gap: 7px; padding-left: 8px; margin-right: 116px; font-size: 14px; }
.locate input { flex: 1; min-width: 0; }
.locate input::placeholder { color: #555; opacity: 1; }
.f { border: 1px solid #77736f; border-radius: 3px; background: #b1b1b1; height: 24px; }
.coord { width: 135px; margin: 0 4px; text-align: center; }
.status > label[for=coord] { width: 60px; }
.smouse { margin-right: 12px; }
.selwrap { display: flex; align-items: center; position: relative; margin-left: 3px; }
.selwrap select { appearance: none; width: 97px; padding-left: 2px; }
.selwrap svg { position: absolute; right: 6px; fill: #333; }
.selwrap::after { content: ""; position: absolute; right: 19px; width: 1px; height: 22px; background: #77736f; }
.lock { margin: 0 9px 0 12px; }
.spin { display: flex; width: 97px; height: 24px; border: 1px solid #77736f; border-radius: 3px; background: #b1b1b1; margin-left: 2px; }
.spin input { flex: 1; min-width: 0; padding-left: 4px; }
.spin > span { width: 15px; border-left: 1px solid #77736f; display: flex; flex-direction: column; align-items: center; justify-content: space-evenly; }
.spin svg { width: 8px; height: 5px; fill: #333; }
.rotl { margin-left: 10px; margin-right: 6px; }
.render { display: flex; align-items: center; gap: 5px; margin-left: 5px; }
.crs { display: flex; align-items: center; gap: 5px; margin-left: auto; }
.msg { margin-left: 19px; }

/* Dialog windows */
.win { position: absolute; display: flex; flex-direction: column; background: #eeeae5; border-radius: 6px 6px 0 0; }
.dsm { left: 206px; right: 160px; top: 27px; bottom: 111px; box-shadow: 0 4px 18px rgba(0, 0, 0, .5); }
.tr { left: 338px; right: 272px; top: 149px; bottom: 122px; }
.wtitle { flex: none; height: 30px; display: flex; align-items: center; padding: 0 6px 1px 0; border-radius: 6px 6px 0 0; background: linear-gradient(#59564e, #3d3c37); color: #dcd9d3; }
.wtitle h1 { flex: 1; text-align: center; font-weight: 700; padding-left: 20px; }
.inactive { background: #3c3b37; color: #8f8d88; }
.inactive .wbtn { background: #55534f; }
.dsm-body { flex: 1; min-height: 0; display: flex; }
.sources { width: 112px; flex: none; overflow: hidden; background: #5b5b5b; color: #fff; }
.sources a { display: block; height: 36px; line-height: 38px; padding-left: 37px; position: relative; white-space: nowrap; }
.sources .two { line-height: 17px; padding-top: 1px; }
.sources .tall { height: 42px; padding-top: 4px; }
.sources .on { background: #eeeae5; color: #000; padding-left: 40px; }
.si { position: absolute; left: 3px; top: 4px; width: 28px; height: 28px; }
.si svg { position: absolute; left: 0; top: 0; width: 28px; height: 28px; }
.si .ras { width: 24px; height: 24px; left: 2px; }
.si .pl { width: 10px; height: 10px; left: 18px; top: 18px; }
.on .pl { left: 20px; }
.si .arc { width: 16px; height: 16px; top: 12px; }
.dsm-main { flex: 1; padding: 16px 14px 14px 16px; display: flex; flex-direction: column; position: relative; }
.dsm-main h3 { margin-left: 1px; }
.group { border: 1px solid #d8d4cf; border-radius: 2px; background: #ebe7e3; display: flex; align-items: center; }
.g1 { height: 66px; margin-top: 2px; padding-left: 12px; gap: 13px; }
.g1 label { display: flex; align-items: center; gap: 6px; }
input[type=radio] { appearance: none; width: 14px; height: 14px; border: 1px solid #8f8b87; border-radius: 50%; background: #fff; }
input[type=radio]:checked { background: radial-gradient(circle, #222 3px, #fff 4px); }
.g2 { height: 52px; margin-top: 28px; padding: 0 12px; gap: 6px; }
.path { flex: 1; height: 25px; border: 1px solid #b5b1ac; border-radius: 3px; background: #fff; display: flex; align-items: center; gap: 8px; padding-right: 8px; }
.path input { flex: 1; text-align: right; }
.dsm-foot { margin-top: auto; display: flex; justify-content: flex-end; gap: 6px; }
.btn { min-width: 80px; height: 25px; border: 1px solid #b0aca7; border-radius: 3px; background: linear-gradient(#fff, #ebe8e4); display: flex; align-items: center; justify-content: center; gap: 2px; }
.btn.dots { min-width: 30px; }
.primary { border-color: #2c73a3; background: linear-gradient(#fdfdfd, #d9dfe4); }
.resize { position: absolute; right: 4px; bottom: 4px; }

/* Transformation dialog */
.tr-body { flex: 1; min-height: 0; padding: 11px; display: flex; flex-direction: column; }
.note { flex: none; height: 70px; border: 1px solid #b5b1ac; background: #fff; display: flex; overflow: hidden; }
.note p { flex: 1; padding: 4px; font: 15px/18px "DejaVu Sans", sans-serif; }
.crs-pair { display: grid; grid-template-columns: 110px 1fr; gap: 14px 6px; padding: 10px 0; white-space: nowrap; }
.grid { flex: none; height: 70px; border: 1px solid #b5b1ac; background: #fff; display: grid; grid-template: 1fr 14px / 1fr 14px; }
.grid-view { overflow: hidden; min-width: 0; }
.grid table { border-collapse: separate; border-spacing: 0; white-space: nowrap; }
.grid th, .grid td { border: solid #b5b1ac; border-width: 0 1px 1px 0; padding: 0 4px 0 3px; height: 31px; }
.grid thead th { height: 20px; background: linear-gradient(#fff, #eeece9); }
.grid .name { min-width: 647px; }
.grid tbody th { background: #f4f2f0; padding: 0 10px 0 3px; }
.grid td { background: #308cc6; color: #fff; }
.grid .next td, .grid .next th { background: #fff; height: 10px; }
.hbar { display: flex; border-top: 1px solid #b5b1ac; }
.hbar .sb { width: 14px; height: 13px; }
.hbar .sb svg { width: 5px; height: 8px; }
.hbar .thumb { flex: 0 0 232px; border-width: 0 1px; }
.hbar .trough { flex: 1; height: auto; border: 0; border-right: 1px solid #b5b1ac; }
.corner { border: solid #b5b1ac; border-width: 1px 0 0 1px; background: #eeeae5; }
.info { flex: none; height: 171px; margin-top: 6px; display: flex; }
.desc { flex: 1; height: 151px; overflow: hidden; white-space: nowrap; }
.desc p { margin-bottom: 12px; }
.map { width: 230px; height: 171px; border: 1px solid #b5b1ac; }
.checks { display: grid; grid-template-columns: 230px 389px 1fr; padding: 8px 0 9px; white-space: nowrap; }
.checks label { display: flex; align-items: center; gap: 5px; }
.actions { display: flex; gap: 6px; }
```
